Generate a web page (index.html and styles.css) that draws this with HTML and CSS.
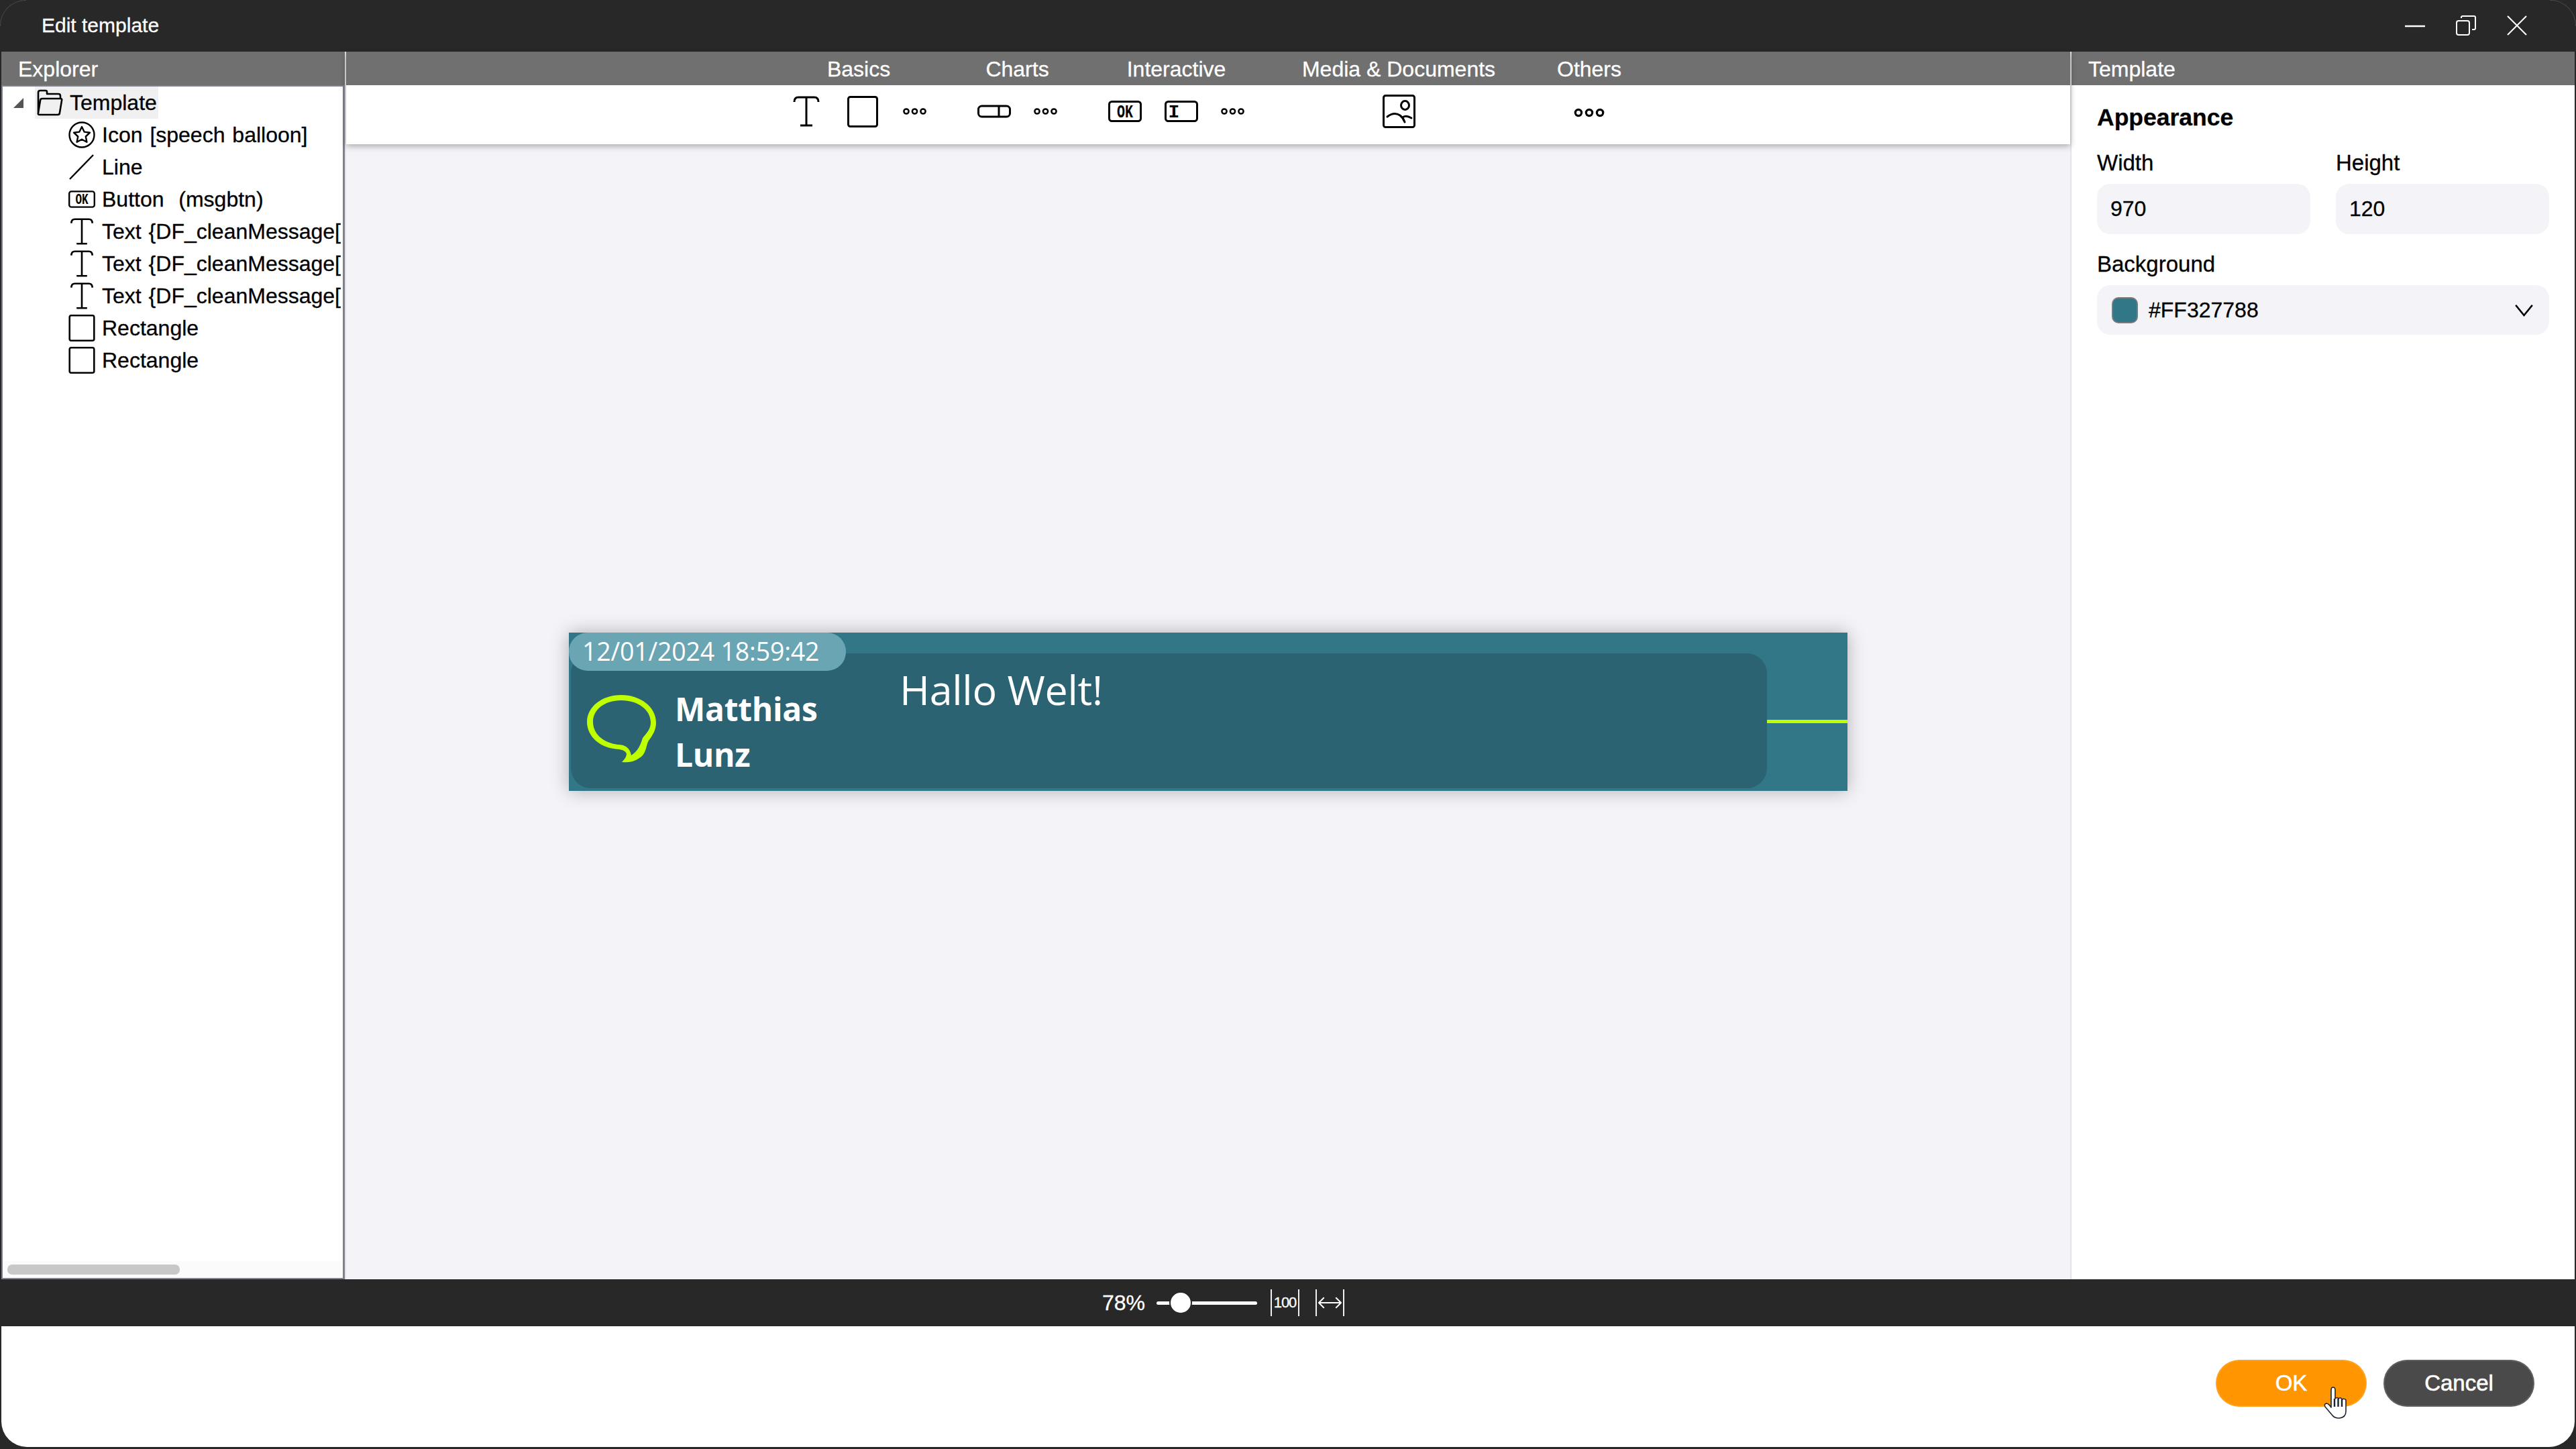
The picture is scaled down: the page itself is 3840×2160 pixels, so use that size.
FILE: index.html
```html
<!doctype html>
<html>
<head>
<meta charset="utf-8">
<link rel="stylesheet" href="styles.css">
<title>Edit template</title>
</head>
<body>

<svg class="sprite" width="0" height="0">
    <defs>
        <symbol id="i-text" viewBox="0 0 40 46">
            <path d="M2 9Q2 2 8 2H32Q38 2 38 9M20 2V44M11 44H29" fill="none" stroke="currentColor" stroke-width="3"/>
        </symbol>
        <symbol id="i-rect" viewBox="0 0 46 47">
            <rect x="1.5" y="1.5" width="43" height="44" rx="3" fill="none" stroke="currentColor" stroke-width="3"/>
        </symbol>
        <symbol id="i-dots" viewBox="0 0 35 14">
            <g fill="none" stroke="currentColor" stroke-width="2.5">
                <circle cx="5" cy="7" r="3.6"/><circle cx="17.5" cy="7" r="3.6"/><circle cx="30" cy="7" r="3.6"/>
            </g>
        </symbol>
        <symbol id="i-toggle" viewBox="0 0 50 20">
            <rect x="1.5" y="2" width="47" height="16" rx="5" fill="none" stroke="currentColor" stroke-width="3"/>
            <path d="M32 2V18" stroke="currentColor" stroke-width="3"/>
        </symbol>
        <symbol id="i-ok" viewBox="0 0 50 32">
            <rect x="1.5" y="1.5" width="47" height="29" rx="4" fill="none" stroke="currentColor" stroke-width="3"/>
            <text x="25" y="25" text-anchor="middle" textLength="24" lengthAdjust="spacingAndGlyphs" class="svg-label">OK</text>
        </symbol>
        <symbol id="i-input" viewBox="0 0 50 32">
            <rect x="1.5" y="1.5" width="47" height="29" rx="4" fill="none" stroke="currentColor" stroke-width="3"/>
            <text x="14" y="25" text-anchor="middle" class="svg-label">I</text>
        </symbol>
        <symbol id="i-image" viewBox="0 0 49 50">
            <rect x="1.5" y="1.5" width="46" height="47" rx="3" fill="none" stroke="currentColor" stroke-width="3"/>
            <ellipse cx="33.5" cy="16" rx="6" ry="6.5" fill="none" stroke="currentColor" stroke-width="3"/>
            <path d="M7 33Q17 25 26 31Q31 35 33 41M30 34Q35 30 43 35" fill="none" stroke="currentColor" stroke-width="3" stroke-linecap="round"/>
        </symbol>
        <symbol id="i-folder" viewBox="0 0 40 40">
            <path d="M3 36V5Q3 2 6 2H14Q16 2 16 4V7H33Q36 7 36 10V14M9 14H36Q39 14 38 17L35 35Q35 38 32 38H5Q2 38 3 35L6 17Q6 14 9 14Z" fill="none" stroke="currentColor" stroke-width="2.6" stroke-linejoin="round"/>
        </symbol>
        <symbol id="i-star" viewBox="0 0 40 40">
            <circle cx="20" cy="20" r="18.5" fill="none" stroke="currentColor" stroke-width="2.4"/>
            <path d="M20 8L23.6 15.6L32 16.7L25.8 22.5L27.4 30.8L20 26.8L12.6 30.8L14.2 22.5L8 16.7L16.4 15.6Z" fill="none" stroke="currentColor" stroke-width="2.4" stroke-linejoin="round"/>
        </symbol>
        <symbol id="i-line" viewBox="0 0 40 40">
            <path d="M2 38L37 2" fill="none" stroke="currentColor" stroke-width="2.4"/>
        </symbol>
    </defs>
</svg>

<div class="window">

    <header class="titlebar">
        <span class="title">Edit template</span>
        <div class="win-buttons">
            <svg class="win-btn" viewBox="0 0 30 30"><path d="M0 16H30" stroke="#fff" stroke-width="2.5"/></svg>
            <svg class="win-btn" viewBox="0 0 30 30" fill="none" stroke="#fff" stroke-width="2"><rect x="1" y="8" width="19" height="21" rx="3"/><path d="M8 4V3Q8 1 10 1H27Q29 1 29 3V19Q29 21 27 21H24"/></svg>
            <svg class="win-btn" viewBox="0 0 30 30"><path d="M1 1L29 29M29 1L1 29" stroke="#fff" stroke-width="2"/></svg>
        </div>
    </header>

    <main class="workspace">

        <aside class="explorer">
            <div class="pane-head">Explorer</div>
            <ul class="tree">
                <li class="tree-root">
                    <span class="tree-arrow"></span>
                    <span class="tree-selected"><svg class="tree-ico"><use href="#i-folder"/></svg>Template</span>
                </li>
                <li><svg class="tree-ico"><use href="#i-star"/></svg>Icon [speech balloon]</li>
                <li><svg class="tree-ico"><use href="#i-line"/></svg>Line</li>
                <li><svg class="tree-ico tree-ok"><use href="#i-ok"/></svg>Button  (msgbtn)</li>
                <li><svg class="tree-ico"><use href="#i-text"/></svg>Text {DF_cleanMessage[</li>
                <li><svg class="tree-ico"><use href="#i-text"/></svg>Text {DF_cleanMessage[</li>
                <li><svg class="tree-ico"><use href="#i-text"/></svg>Text {DF_cleanMessage[</li>
                <li><svg class="tree-ico"><use href="#i-rect"/></svg>Rectangle</li>
                <li><svg class="tree-ico"><use href="#i-rect"/></svg>Rectangle</li>
            </ul>
            <div class="hscroll"><div class="hscroll-thumb"></div></div>
        </aside>

        <section class="designer">
            <div class="ribbon">
                <div class="tab">Basics</div>
                <div class="tab">Charts</div>
                <div class="tab">Interactive</div>
                <div class="tab">Media &amp; Documents</div>
                <div class="tab">Others</div>

                <div class="tools tools-wide">
                    <svg class="tool-text"><use href="#i-text"/></svg>
                    <svg class="tool-rect"><use href="#i-rect"/></svg>
                    <svg class="tool-dots"><use href="#i-dots"/></svg>
                </div>
                <div class="tools">
                    <svg class="tool-toggle"><use href="#i-toggle"/></svg>
                    <svg class="tool-dots"><use href="#i-dots"/></svg>
                </div>
                <div class="tools">
                    <svg class="tool-btn"><use href="#i-ok"/></svg>
                    <svg class="tool-btn"><use href="#i-input"/></svg>
                    <svg class="tool-dots"><use href="#i-dots"/></svg>
                </div>
                <div class="tools">
                    <svg class="tool-image"><use href="#i-image"/></svg>
                </div>
                <div class="tools">
                    <svg class="tool-more"><use href="#i-dots"/></svg>
                </div>
            </div>

            <div class="canvas">
                <div class="card">
                    <div class="card-body"></div>
                    <div class="card-line"></div>
                    <div class="card-date">12/01/2024 18:59:42</div>
                    <svg class="card-balloon" viewBox="0 0 103 101">
                        <path fill-rule="evenodd" d="M51 0C80 0 103 18 103 41C103 52 98 60 92 68C88 74 89 88 78 94C70 100 60 101 52 100C56 96 59 92 59 88C58 84 54 82 48 81C20 80 0 62 0 40C0 18 22 0 51 0ZM51 8C26 8 9 22 9 40C9 58 24 71 46 74C56 74 64 78 66 90C76 84 80 74 83 64C90 56 95 50 95 41C95 22 76 8 51 8Z"/>
                    </svg>
                    <div class="card-name">Matthias<br>Lunz</div>
                    <div class="card-message">Hallo Welt!</div>
                </div>
            </div>
        </section>

        <aside class="props">
            <div class="pane-head">Template</div>
            <div class="props-body">
                <h3>Appearance</h3>
                <div class="size-fields">
                    <label>Width<input type="text" value="970"></label>
                    <label>Height<input type="text" value="120"></label>
                </div>
                <div class="bg-label">Background</div>
                <div class="color-select">
                    <span class="swatch"></span>
                    <span class="color-value">#FF327788</span>
                    <svg class="chevron" viewBox="0 0 30 20"><path d="M2 2L15 18L28 2" fill="none" stroke="#000" stroke-width="2.6"/></svg>
                </div>
            </div>
        </aside>

    </main>

    <div class="zoombar">
        <span class="zoom-value">78%</span>
        <div class="slider"><span class="slider-knob"></span></div>
        <div class="zoom-btn zoom-100">100</div>
        <div class="zoom-btn">
            <svg class="fit-arrow" viewBox="0 0 36 20"><path d="M1 10H35M9 2L1 10L9 18M27 2L35 10L27 18" fill="none" stroke="#fff" stroke-width="2"/></svg>
        </div>
    </div>

    <footer class="actions">
        <button class="btn btn-ok">OK</button>
        <button class="btn btn-cancel">Cancel</button>
        <svg class="cursor" viewBox="0 0 36 48">
            <path d="M11 31V5Q11 1 14 1Q17 1 17 5V18Q20 15 22 18Q25 15 27 19Q31 17 33 20V37Q33 46 23 47Q16 47 13 43L2 30Q0 26 4 25Q7 25 11 31Z" fill="#fff" stroke="#1c2230" stroke-width="1.6" stroke-linejoin="round"/>
            <path d="M16 18V30M21.500 18V30M27 19V30" fill="none" stroke="#1c2230" stroke-width="2.400"/>
        </svg>
    </footer>

</div>

</body>
</html>
```

FILE: styles.css
```css
html, body
{
    margin:0;
    height:100%;
    background:#282828;
}
body
{
    font:normal normal 33px/48px "Liberation Sans", sans-serif;
    color:#000;
    -webkit-text-stroke:.3px;
}
.sprite
{
    position:absolute;
}
.svg-label
{
    font:bold 28px "Liberation Mono", monospace;
    fill:currentColor;
}

.window
{
    width:3840px;
    height:2160px;
    display:flex;
    flex-direction:column;
    background:#282828;
    overflow:hidden;
}

/* title bar */
.titlebar
{
    position:relative;
    flex:0 0 77px;
    display:flex;
    align-items:center;
    justify-content:space-between;
    padding:0 73px 0 62px;
    color:#fff;
}
/* faint rounded window corners */
.titlebar::before,
.titlebar::after
{
    content:"";
    position:absolute;
    top:0;
    width:38px;
    height:38px;
    border-top:1px solid #484848;
}
.titlebar::before
{
    left:0;
    border-left:1px solid #484848;
    border-top-left-radius:38px;
}
.titlebar::after
{
    right:0;
    border-right:1px solid #484848;
    border-top-right-radius:38px;
}
.title
{
    font-size:30px;
    margin-top:-1px;
}
.win-buttons
{
    display:flex;
    gap:46px;
    margin-top:-2px;
}
.win-btn
{
    width:30px;
    height:30px;
}

/* main area */
.workspace
{
    flex:0 0 1830px;
    display:flex;
    padding:0 2px;
    min-height:0;
}
.pane-head
{
    height:50px;
    flex:none;
    padding-left:25px;
    background:#707070;
    color:#fff;
    font-size:32px;
    line-height:52px;
}

/* explorer */
.explorer
{
    flex:0 0 514px;
    min-width:0;
    box-sizing:border-box;
    display:flex;
    flex-direction:column;
    background:#fff;
    border-right:2px solid #e4e4e8;
}
.tree
{
    flex:1;
    margin:0;
    padding:0;
    list-style:none;
    border:solid #7e828c;
    border-width:2px 3px 0 2px;
    overflow:hidden;
    font-size:32px;
    word-spacing:2px;
}
.tree li
{
    height:48px;
    display:flex;
    align-items:center;
    gap:10px;
    padding-left:98px;
    white-space:pre;
}
.tree .tree-root
{
    padding-left:16px;
    gap:17px;
    white-space:normal;
}
.tree-arrow
{
    width:0;
    height:0;
    border-style:solid;
    border-width:0 0 15px 15px;
    border-color:transparent transparent #555 transparent;
}
.tree-selected
{
    display:flex;
    align-items:center;
    gap:10px;
    height:48px;
    padding:0 2px;
    background:#f0f0f0;
}
.tree-ico
{
    flex:none;
    width:40px;
    height:40px;
}
.tree-ok
{
    height:30px;
}
.hscroll
{
    flex:0 0 25px;
    box-sizing:border-box;
    padding:5px 0 5px 7px;
    background:#fbfbfb;
    border:solid #7e828c;
    border-width:0 3px 2px 2px;
}
.hscroll-thumb
{
    width:257px;
    height:15px;
    border-radius:7px;
    background:#c8c8c8;
}

/* ribbon + canvas */
.designer
{
    flex:1;
    display:flex;
    flex-direction:column;
    min-width:0;
}
.ribbon
{
    position:relative;
    z-index:1;
    flex:none;
    display:grid;
    grid-template-columns:278px 195px 279px 384px 184px;
    grid-template-rows:50px 88px;
    justify-content:center;
    background:linear-gradient(#707070 50px, #fff 50px);
    box-shadow:0 3px 9px rgba(0,0,0,.3);
}
.tab
{
    text-align:center;
    color:#fff;
    font-size:32px;
    line-height:52px;
}
.tools
{
    display:flex;
    align-items:center;
    justify-content:center;
    gap:34px;
    padding-bottom:10px;
}
.tools-wide
{
    gap:39px;
    padding-left:3px;
}
.tool-text
{
    width:40px;
    height:46px;
}
.tool-rect
{
    width:46px;
    height:47px;
    margin:0 -2px 0 2px;
}
.tool-dots
{
    width:35px;
    height:14px;
}
.tool-toggle
{
    width:50px;
    height:20px;
}
.tool-btn
{
    width:50px;
    height:32px;
}
.tool-image
{
    width:49px;
    height:50px;
}
.tool-more
{
    width:46px;
    height:18px;
    margin-top:4px;
}
.canvas
{
    flex:1;
    display:flex;
    align-items:center;
    justify-content:center;
    background:#f3f3f8;
}

/* the template being edited, children sit on its free canvas */
.card
{
    position:relative;
    flex:none;
    width:1906px;
    height:236px;
    background:#327788;
    box-shadow:0 0 26px rgba(0,0,0,.28);
    color:#fff;
    font-family:"Open Sans", sans-serif;
    -webkit-text-stroke:0;
}
.card-body
{
    position:absolute;
    left:3px;
    top:31px;
    width:1783px;
    height:201px;
    border-radius:30px;
    background:#2b6372;
}
.card-line
{
    position:absolute;
    left:1786px;
    top:130px;
    width:120px;
    height:5px;
    background:#bfff00;
}
.card-date
{
    position:absolute;
    left:0;
    top:0;
    width:413px;
    height:57px;
    box-sizing:border-box;
    padding-left:20px;
    border-radius:28px;
    background:#6aa5b3;
    font-size:37.500px;
    line-height:55px;
    letter-spacing:-.2px;
    white-space:nowrap;
}
.card-balloon
{
    position:absolute;
    left:27px;
    top:93px;
    width:103px;
    height:101px;
    fill:#bfff00;
}
.card-name
{
    position:absolute;
    left:158px;
    top:80px;
    font-size:48px;
    line-height:68px;
    font-weight:700;
    letter-spacing:-.3px;
}
.card-message
{
    position:absolute;
    left:493px;
    top:43px;
    font-size:61px;
    line-height:84px;
    font-weight:400;
    letter-spacing:-.3px;
}

/* properties */
.props
{
    flex:0 0 752px;
    box-sizing:border-box;
    display:flex;
    flex-direction:column;
    background:#fff;
    border-left:2px solid #e4e4e8;
}
.props-body
{
    padding:28px 38px 0;
}
.props h3
{
    margin:0 0 28px;
    font-size:35.500px;
    line-height:40px;
}
.size-fields
{
    display:grid;
    grid-template-columns:1fr 1fr;
    gap:38px;
}
.size-fields label
{
    display:block;
    font-size:33px;
    line-height:40px;
}
.size-fields input
{
    display:block;
    box-sizing:border-box;
    width:100%;
    height:75px;
    margin-top:11px;
    padding:0 20px;
    border:none;
    outline:none;
    border-radius:20px;
    background:#f3f3f8;
    color:#000;
    font:32px "Liberation Sans", sans-serif;
    -webkit-text-stroke:.3px;
}
.bg-label
{
    margin:25px 0 11px;
    font-size:33px;
    line-height:40px;
}
.color-select
{
    height:74px;
    display:flex;
    align-items:center;
    padding:0 23px 0 22px;
    border-radius:20px;
    background:#f3f3f8;
}
.swatch
{
    width:39px;
    height:39px;
    box-sizing:border-box;
    border:2px solid #7a7a7a;
    border-radius:10px;
    background:#327788;
}
.color-value
{
    flex:1;
    margin-left:16px;
    font-size:32px;
}
.chevron
{
    width:29px;
    height:19px;
}

/* zoom bar */
.zoombar
{
    flex:0 0 70px;
    display:flex;
    align-items:center;
    padding-left:1643px;
    color:#fff;
}
.zoom-value
{
    width:81px;
    font-size:32px;
}
.slider
{
    position:relative;
    width:150px;
    height:5px;
    border-radius:3px;
    background:#fff;
}
.slider-knob
{
    position:absolute;
    left:21px;
    top:-13px;
    width:30px;
    height:30px;
    border-radius:50%;
    background:#fff;
    box-shadow:0 0 0 2px #282828;
}
.zoom-btn
{
    box-sizing:border-box;
    width:43px;
    height:40px;
    display:flex;
    align-items:center;
    justify-content:center;
    border:solid #f0f0f0;
    border-width:0 2px;
    margin-left:24px;
}
.zoom-100
{
    margin-left:20px;
    font:22px/40px "Liberation Sans", sans-serif;
    letter-spacing:-1px;
}
.fit-arrow
{
    width:35px;
    height:20px;
}

/* dialog buttons */
.actions
{
    position:relative;
    flex:0 0 180px;
    box-sizing:border-box;
    display:flex;
    justify-content:flex-end;
    align-items:center;
    gap:25px;
    margin:0 2px;
    padding:0 60px 10px 0;
    background:#fff;
    border-radius:0 0 38px 38px;
}
.btn
{
    width:225px;
    height:70px;
    border:none;
    border-radius:35px;
    color:#fff;
    font:normal 33px "Liberation Sans", sans-serif;
    -webkit-text-stroke:.6px #fff;
    box-shadow:inset 0 0 0 2px rgba(255,255,255,.12);
}
.btn-ok
{
    background:#ff9500;
}
.btn-cancel
{
    background:#4a4a4a;
}
.cursor
{
    position:absolute;
    left:3462px;
    top:90px;
    width:36px;
    height:48px;
}
```
